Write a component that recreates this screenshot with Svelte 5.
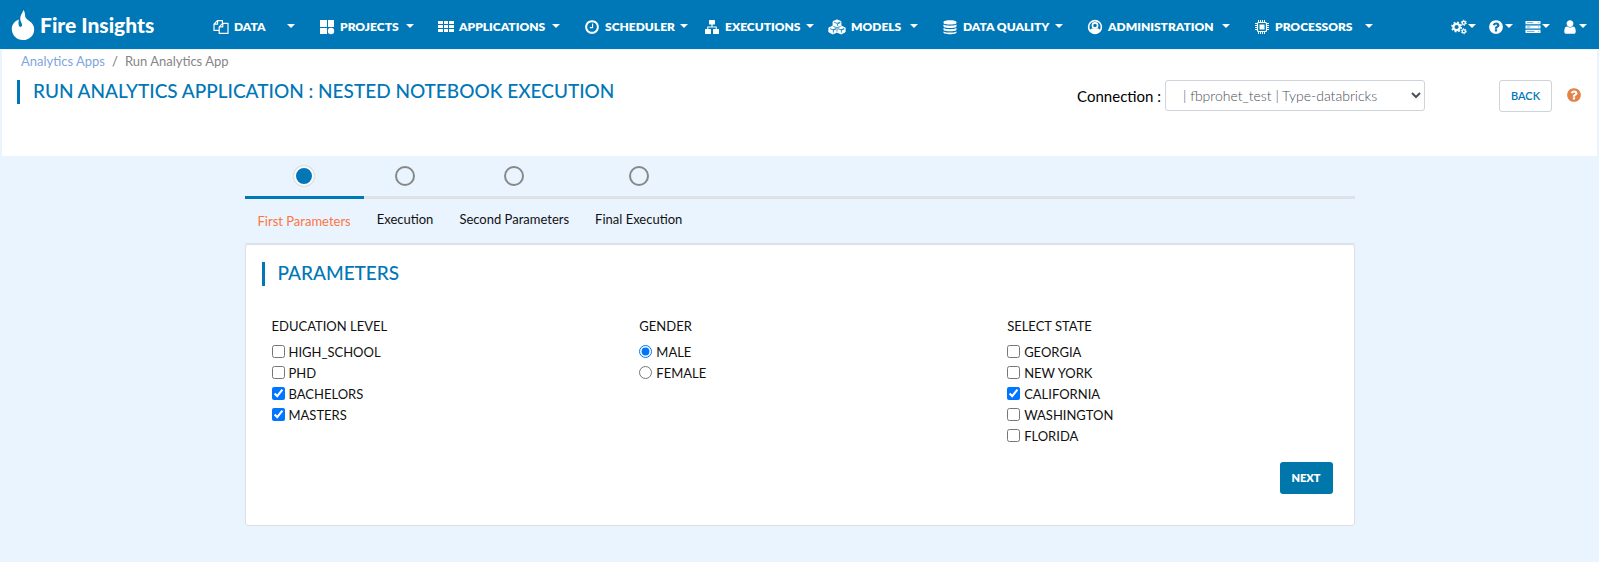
<script>
  const menus = [
    { icon: 'copy', label: 'DATA' },
    { icon: 'tiles', label: 'PROJECTS' },
    { icon: 'grid', label: 'APPLICATIONS' },
    { icon: 'clock', label: 'SCHEDULER' },
    { icon: 'sitemap', label: 'EXECUTIONS' },
    { icon: 'cubes', label: 'MODELS' },
    { icon: 'database', label: 'DATA QUALITY' },
    { icon: 'admin', label: 'ADMINISTRATION' },
    { icon: 'chip', label: 'PROCESSORS' }
  ];
  const tools = [
    { icon: 'cogs', label: 'Settings' },
    { icon: 'help', label: 'Help' },
    { icon: 'server', label: 'Servers' },
    { icon: 'user', label: 'Account' }
  ];
  const steps = ['First Parameters', 'Execution', 'Second Parameters', 'Final Execution'];
  let current = $state(0);

  let education = $state(['BACHELORS', 'MASTERS']);
  let gender = $state('MALE');
  let region = $state(['CALIFORNIA']);
  const levels = ['HIGH_SCHOOL', 'PHD', 'BACHELORS', 'MASTERS'];
  const genders = ['MALE', 'FEMALE'];
  const regions = ['GEORGIA', 'NEW YORK', 'CALIFORNIA', 'WASHINGTON', 'FLORIDA'];
</script>

{#snippet icon(name)}
  {#if name === 'copy'}
    <svg class="icon" viewBox="0 0 16 16" fill="none" stroke="currentColor" stroke-width="1.2" stroke-linejoin="round" aria-hidden="true">
      <path d="M6.2 11.4H1V5.2L4.4 1.6H9.4V4M4.6 1.6V5.2H1M6.2 14.4V7.8L9.6 4.3H15V14.4ZM9.8 4.3V7.8H6.2" />
    </svg>
  {:else if name === 'tiles'}
    <svg class="icon" viewBox="0 0 16 16" fill="currentColor" aria-hidden="true">
      <path d="M1 1H8V8H1ZM9 1H15V8H9ZM1 9H8V15H1Z" /><circle cx="12" cy="12" r="3.2" />
    </svg>
  {:else if name === 'grid'}
    <svg class="icon" viewBox="0 0 16 16" fill="currentColor" aria-hidden="true">
      <path d="M0 2H5V5H0ZM6 2H10V5H6ZM11 2H16V5H11ZM0 6H5V9H0ZM6 6H10V9H6ZM11 6H16V9H11ZM0 10H5V13H0ZM6 10H10V13H6ZM11 10H16V13H11Z" />
    </svg>
  {:else if name === 'clock'}
    <svg class="icon" viewBox="0 0 1792 1792" fill="currentColor" aria-hidden="true">
      <path d="M1024 544v448q0 14-9 23t-23 9h-320q-14 0-23-9t-9-23v-64q0-14 9-23t23-9h224v-352q0-14 9-23t23-9h64q14 0 23 9t9 23zm416 352q0-148-73-273t-198-198-273-73-273 73-198 198-73 273 73 273 198 198 273 73 273-73 198-198 73-273zm224 0q0 209-103 385.5t-279.5 279.5-385.5 103-385.5-103-279.5-279.5-103-385.5 103-385.5 279.5-279.5 385.5-103 385.5 103 279.5 279.5 103 385.5z" />
    </svg>
  {:else if name === 'sitemap'}
    <svg class="icon" viewBox="0 0 16 16" aria-hidden="true">
      <g fill="currentColor"><rect x="5" y="1" width="6" height="4.6" rx=".6" /><rect x="1" y="10" width="6" height="5" rx=".6" /><rect x="9" y="10" width="6" height="5" rx=".6" /></g>
      <path d="M8 5V8M3.8 10.5V8H12.2V10.5" fill="none" stroke="currentColor" stroke-width="1.1" />
    </svg>
  {:else if name === 'cubes'}
    <svg class="icon wide" viewBox="0 0 18 16" aria-hidden="true">
      <path fill="currentColor" d="M9 .8 13 2.5V7L17.2 8.8V13L13.2 15 9 13.2 4.8 15 .8 13V8.8L5 7V2.5Z" stroke="currentColor" stroke-width=".8" stroke-linejoin="round" />
      <path fill="none" stroke="#0077b6" stroke-width=".8" d="M6 3.2 9 4.4 12 3.2M9.6 7V4.8L12.4 3.6M2 9.6 5 10.8 8 9.6M5.4 13.6V11L8 10M10 9.6 13 10.8 16 9.6M13.4 13.6V11L16.4 9.8M5.4 7.4 9 8.8 12.6 7.4M9 9V12.6" />
    </svg>
  {:else if name === 'database'}
    <svg class="icon" viewBox="0 0 16 16" fill="currentColor" aria-hidden="true">
      <path d="M1.5 3C1.5.6 14.5.6 14.5 3V4C14.5 6 1.5 6 1.5 4ZM1.5 5.6C4.5 7.2 11.5 7.2 14.5 5.6V7.6C14.5 9.6 1.5 9.6 1.5 7.6ZM1.5 9.1C4.5 10.7 11.5 10.7 14.5 9.1V10.8C14.5 12.8 1.5 12.8 1.5 10.8ZM1.5 12.4C4.5 14 11.5 14 14.5 12.4V13.6C14.5 15.8 1.5 15.8 1.5 13.6Z" />
    </svg>
  {:else if name === 'admin'}
    <svg class="icon" viewBox="0 0 16 16" aria-hidden="true">
      <circle cx="8" cy="8" r="6.4" fill="none" stroke="currentColor" stroke-width="1.6" />
      <circle cx="8" cy="6.5" r="2.6" fill="none" stroke="currentColor" stroke-width="1.6" />
      <path fill="currentColor" d="M2.4 12C3.2 10 4.6 9.4 5.8 9.2 7.2 10.2 8.8 10.2 10.2 9.2 11.4 9.4 12.8 10 13.6 12 10.6 15.8 5.4 15.8 2.4 12Z" />
    </svg>
  {:else if name === 'chip'}
    <svg class="icon" viewBox="0 0 16 16" fill="none" stroke="currentColor" aria-hidden="true">
      <rect x="3.5" y="3.5" width="9" height="9" rx="1" stroke-width="1.2" />
      <rect x="6" y="6" width="4" height="4" fill="currentColor" />
      <path stroke-width="1" d="M4.5 1V3M6.5 1V3M8.5 1V3M10.5 1V3M4.5 13V15M6.5 13V15M8.5 13V15M10.5 13V15M1 4.5H3M1 6.5H3M1 8.5H3M1 10.5H3M13 4.5H15M13 6.5H15M13 8.5H15M13 10.5H15" />
    </svg>
  {:else if name === 'cogs'}
    <svg class="icon" viewBox="0 0 16 16" fill="none" stroke="currentColor" aria-hidden="true">
      <circle cx="5.6" cy="8" r="3.2" stroke-width="2.2" /><circle cx="5.6" cy="8" r="4.7" stroke-width="1.6" stroke-dasharray="1.85 1.84" />
      <circle cx="12.8" cy="3.8" r="1.6" stroke-width="1.4" /><circle cx="12.8" cy="3.8" r="2.6" stroke-width="1" stroke-dasharray="1.36 1.36" />
      <circle cx="12.8" cy="12.2" r="1.6" stroke-width="1.4" /><circle cx="12.8" cy="12.2" r="2.6" stroke-width="1" stroke-dasharray="1.36 1.36" />
    </svg>
  {:else if name === 'help'}
    <svg class="icon" viewBox="0 0 1792 1792" fill="currentColor" aria-hidden="true">
      <path d="M1024 1376v-192q0-14-9-23t-23-9h-192q-14 0-23 9t-9 23v192q0 14 9 23t23 9h192q14 0 23-9t9-23zm256-672q0-88-55.5-163t-138.5-116-170-41q-243 0-371 213-15 24 8 42l132 100q7 6 19 6 16 0 25-12 53-68 86-92 34-24 86-24 48 0 85.5 26t37.5 59q0 38-20 61t-68 45q-63 28-115.5 86.5t-52.5 125.5v36q0 14 9 23t23 9h192q14 0 23-9t9-23q0-19 21.5-49.5t54.5-49.5q32-18 49-28.5t46-35 44.5-48 28-60.5 12.5-81zm384 192q0 209-103 385.5t-279.5 279.5-385.5 103-385.5-103-279.5-279.5-103-385.5 103-385.5 279.5-279.5 385.5-103 385.5 103 279.5 279.5 103 385.5z" />
    </svg>
  {:else if name === 'server'}
    <svg class="icon" viewBox="0 0 16 16" aria-hidden="true">
      <path fill="currentColor" d="M.5 2H15.5V5.2H.5ZM.5 6.4H15.5V9.6H.5ZM.5 10.8H15.5V14H.5Z" />
      <path fill="none" stroke="#0077b6" stroke-width=".6" d="M2 3.6H8M2 8H5.5M2 12.4H9.5M13.2 3.6H14.2M13.2 8H14.2M13.2 12.4H14.2" />
    </svg>
  {:else}
    <svg class="icon" viewBox="0 0 1792 1792" fill="currentColor" aria-hidden="true">
      <path d="M1536 1399q0 109-62.5 187t-150.5 78h-854q-88 0-150.5-78t-62.5-187q0-85 8.5-160.5t31.5-152 58.5-131 94-89 134.5-34.5q131 128 313 128t313-128q76 0 134.5 34.5t94 89 58.5 131 31.5 152 8.5 160.5zm-256-887q0 159-112.5 271.5t-271.5 112.5-271.5-112.5-112.5-271.5 112.5-271.5 271.5-112.5 271.5 112.5 112.5 271.5z" />
    </svg>
  {/if}
{/snippet}

<header class="navbar">
  <a class="brand" href="#home">
    <svg class="flame" viewBox="0 0 24 32" fill="currentColor" aria-hidden="true">
      <path d="M12.6 1C11 4.6 8.8 7 9.4 11.2C9.8 13.4 11.4 14.6 11 16.6C10.6 18.2 8.4 18.4 7.8 16.6C7.2 14.8 7.6 12.8 7.8 10.6C3.6 12.2 .8 15.6 .8 20C.8 26.2 5.6 31 12 31S23.2 26.4 23.2 20.4C23.2 16.6 21.4 14.2 18.6 12.2C15.6 10 13.9 8.8 14 6C14 4 13.4 2.4 12.6 1Z" />
    </svg>
    <span>Fire Insights</span>
  </a>
  <nav class="menus" aria-label="Main">
    {#each menus as menu}
      <button class="menu" class:loose={menu.icon === 'clock' || menu.icon === 'sitemap'}>
        {@render icon(menu.icon)}
        <span>{menu.label}</span>
        <i class="caret"></i>
      </button>
    {/each}
  </nav>
  <div class="tools">
    {#each tools as tool}
      <button class="tool" aria-label={tool.label}>
        {@render icon(tool.icon)}
        <i class="caret"></i>
      </button>
    {/each}
  </div>
</header>

<section class="page-head">
  <ol class="crumbs">
    <li><a href="#apps">Analytics Apps</a></li>
    <li>Run Analytics App</li>
  </ol>
  <div class="title-row">
    <h1 class="heading">RUN ANALYTICS APPLICATION : NESTED NOTEBOOK EXECUTION</h1>
    <div class="connection">
      <label for="connection">Connection :</label>
      <select id="connection">
        <option>| fbprohet_test | Type-databricks</option>
      </select>
    </div>
    <button class="back">BACK</button>
    <a class="page-help" href="#help" aria-label="Help">{@render icon('help')}</a>
  </div>
</section>

<main class="wizard">
  <div class="steps" role="tablist">
    {#each steps as step, i}
      <button class="step" class:active={i === current} role="tab" aria-selected={i === current} onclick={() => (current = i)}>
        <i class="dot"></i>
        <span>{step}</span>
      </button>
    {/each}
  </div>

  <form class="card" onsubmit={(e) => e.preventDefault()}>
    <h2 class="heading">PARAMETERS</h2>
    <div class="fields">
      <fieldset>
        <legend>EDUCATION LEVEL</legend>
        {#each levels as level}
          <label><input type="checkbox" value={level} bind:group={education} />{level}</label>
        {/each}
      </fieldset>
      <fieldset>
        <legend>GENDER</legend>
        {#each genders as g}
          <label><input type="radio" name="gender" value={g} bind:group={gender} />{g}</label>
        {/each}
      </fieldset>
      <fieldset>
        <legend>SELECT STATE</legend>
        {#each regions as r}
          <label><input type="checkbox" value={r} bind:group={region} />{r}</label>
        {/each}
      </fieldset>
    </div>
    <button class="next">NEXT</button>
  </form>
</main>

<style>
  :global(body) {
    background: #e9f4ff;
    color: #111;
    font: 400 13px/20px Lato, sans-serif;
  }
  button, select {
    font: inherit;
    color: inherit;
  }
  button {
    cursor: pointer;
    border: 0;
    background: none;
    padding: 0;
  }
  a {
    text-decoration: none;
  }

  .navbar {
    display: flex;
    align-items: center;
    min-height: 49px;
    padding: 0 12px 0 11px;
    background: #0077b6;
    color: #fff;
  }
  .brand {
    display: flex;
    align-items: center;
    gap: 5px;
    width: 202px;
    color: #fff;
    font: 900 21px/28px Lato, sans-serif;
  }
  .flame {
    width: 24px;
    height: 32px;
  }
  .menus {
    flex: 1;
    display: grid;
    grid-template-columns: 82px 95px 122px 96px 100px 90px 121px 143px 119px;
    column-gap: 24px;
    padding-top: 4px;
  }
  .menu {
    display: flex;
    align-items: center;
    gap: 5px;
    font-size: 12px;
    font-weight: 800;
    white-space: nowrap;
  }
  .menu.loose {
    margin-right: -8px;
  }
  .icon {
    flex: none;
    width: 16px;
    height: 16px;
  }
  .icon.wide {
    width: 18px;
  }
  .caret {
    margin-left: auto;
    margin-bottom: 2px;
    border: 4px solid transparent;
    border-top-color: #fff;
    border-bottom: 0;
  }
  .tools {
    display: flex;
    gap: 12px;
    padding-top: 4px;
  }
  .tool {
    display: flex;
    align-items: center;
    gap: 1px;
  }

  .page-head {
    margin: 1px 2px 0;
    padding: 1px 15px 44px;
    background: #fff;
  }
  .crumbs {
    display: flex;
    margin: 0 0 9px;
    padding: 0 4px;
    list-style: none;
    color: #868686;
  }
  .crumbs li + li::before {
    content: '/';
    padding: 0 7px;
    color: #6c757d;
  }
  .crumbs a {
    color: #7fa6dc;
  }
  .title-row {
    display: flex;
    align-items: flex-start;
  }
  .heading {
    margin: 0;
    padding: 0 0 2px 13px;
    border-left: 3px solid #0077b6;
    color: #0077b6;
    font: 500 19px/22px Lato, sans-serif;
  }
  .title-row .heading {
    flex: 1;
  }
  .connection {
    display: flex;
    align-items: center;
    gap: 4px;
    margin-right: 74px;
    color: #000;
    font-size: 15px;
  }
  select {
    width: 260px;
    height: 31px;
    padding: 0 13px;
    border: 1px solid #ced4da;
    border-radius: 3px;
    background: #fff;
    color: #495057;
    font-size: 14px;
    font-weight: 300;
  }
  .back {
    width: 53px;
    height: 32px;
    border: 1px solid #ced4da;
    border-radius: 3px;
    color: #0077b6;
    font-size: 11px;
    font-weight: 600;
  }
  .page-help {
    display: flex;
    margin: 7px 0 0 14px;
    color: #e2834a;
  }

  .wizard {
    max-width: 1110px;
    margin: 0 auto;
    padding: 10px 15px 36px;
  }
  .steps {
    display: flex;
    height: 77px;
    background: linear-gradient(#dee2e6, #dee2e6) 0 30px / 100% 3px no-repeat;
    border-bottom: 1px solid #dee2e6;
  }
  .step {
    display: flex;
    flex-direction: column;
    align-items: center;
    height: 33px;
    padding: 0 13px;
    color: #111;
    white-space: nowrap;
  }
  .step span {
    margin-top: 23px;
  }
  .dot {
    flex: none;
    box-sizing: border-box;
    width: 20px;
    height: 20px;
    border: 2px solid #888;
    border-radius: 50%;
  }
  .step.active {
    border-radius: 4px 4px 0 0;
    background: linear-gradient(#0077b6, #0077b6) 0 30px / 100% 3px no-repeat;
    color: #ff7540;
  }
  .step.active .dot {
    border-color: #fff;
    background: #0077b6;
    box-shadow: 0 0 1px 1px #d4dde6;
  }
  .step.active span {
    margin-top: 25px;
  }

  .card {
    display: flex;
    flex-direction: column;
    padding: 17px 21px 31px 16px;
    border: 1px solid #dcdfe3;
    border-radius: 3px;
    background: #fff;
  }
  .fields {
    display: grid;
    grid-template-columns: 26fr 26fr 23fr;
    margin: 30px 0 0 10px;
  }
  fieldset {
    display: flex;
    flex-direction: column;
    min-width: 0;
    margin: 0;
    padding: 0;
    border: 0;
  }
  legend {
    padding: 0 0 5px;
  }
  fieldset label {
    display: flex;
    align-items: center;
    gap: 4px;
    height: 21px;
  }
  input {
    width: 13px;
    height: 13px;
    margin: 0;
    accent-color: #0075ff;
  }
  .next {
    align-self: flex-end;
    width: 53px;
    height: 32px;
    margin-top: 16px;
    border-radius: 3px;
    background: #0077aa;
    color: #fff;
    font-size: 11px;
    font-weight: 800;
  }
</style>
